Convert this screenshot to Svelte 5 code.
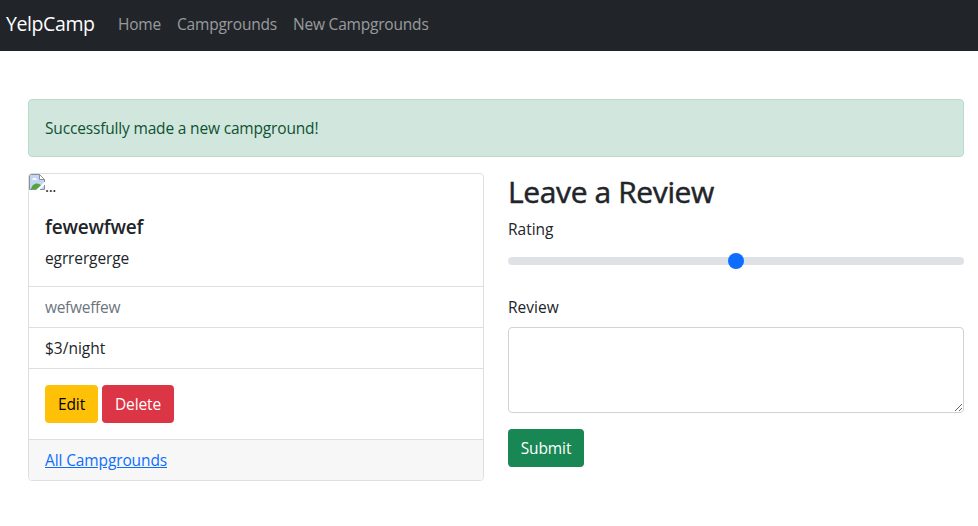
<script>
  let rating = $state(3);
  let review = $state('');
  const links = [
    { label: 'Home', width: 43 },
    { label: 'Campgrounds', width: 100 },
    { label: 'New Campgrounds', width: 137 }
  ];
</script>

<nav class="navbar">
  <a class="brand" href="#home">YelpCamp</a>
  {#each links as link}
    <a class="nav-link" href="#nav" style="width: {link.width}px">{link.label}</a>
  {/each}
</nav>

<main>
  <div class="alert" role="alert"><span>Successfully made a new campground!</span></div>
  <div class="row">
    <section class="card">
      <div class="image">
        <svg width="16" height="16" viewBox="0 0 16 16" aria-hidden="true">
          <path d="M.5.5h10l5 5v10H.5z" fill="#fff" />
          <path d="M1 1h9v5h5v9H1z" fill="#c3d5f6" />
          <path d="M3 5.800c0-1 .8-1.400 1.500-1.300C5 3.400 6.800 3.500 7 4.700c1 0 1.300.4 1.300 1.100z" fill="#fff" />
          <path d="M2 15c.6-3.400 3-5.600 6-5.600 2 0 3.500 1 4.500 2.300L10 15z" fill="#52a63a" />
          <path d="M16 7.500v3L10.500 16H7z" fill="#fff" />
          <path d="M7.500 15.500h-7V.5h10l5 5v2.500M10.500.5v5h5M15.500 11v4.500H11" fill="none" stroke="#8b8f94" />
        </svg><span>...</span>
      </div>
      <div class="body intro">
        <h5>fewewfwef</h5>
        <p><span class="desc">egrrergerge</span></p>
      </div>
      <ul>
        <li class="muted"><span class="place">wefweffew</span></li>
        <li><span class="price">$3/night</span></li>
      </ul>
      <div class="body actions">
        <a class="btn edit" href="#edit">Edit</a>
        <button class="btn delete">Delete</button>
      </div>
      <div class="footer"><a href="#all">All Campgrounds</a></div>
    </section>

    <section class="review">
      <h2>Leave a Review</h2>
      <form onsubmit={(e) => e.preventDefault()}>
        <div class="field rating">
          <label for="rating">Rating</label>
          <input id="rating" type="range" min="1" max="5" bind:value={rating} />
        </div>
        <div class="field">
          <label for="review">Review</label>
          <textarea id="review" bind:value={review}></textarea>
        </div>
        <button class="btn submit">Submit</button>
      </form>
    </section>
  </div>
</main>

<style>
  :global(body) {
    margin: 0;
    background: #fff;
    color: #212529;
    font: 400 15.5px/24px "Open Sans", "Noto Sans", sans-serif;
  }
  * { box-sizing: border-box; }
  a, span, h2, h5, label, .btn { white-space: nowrap; }
  .navbar {
    display: flex;
    align-items: center;
    gap: 16px;
    height: 51px;
    padding: 0 6px 4px;
    background: #212529;
  }
  .brand {
    width: 88px;
    margin-right: 8px;
    color: #fff;
    font-size: 19.5px;
    line-height: 30px;
    text-decoration: none;
    letter-spacing: -0.4px;
  }
  .nav-link {
    color: rgba(255, 255, 255, 0.55);
    text-decoration: none;
    letter-spacing: -0.2px;
  }
  main { padding: 48px 14px 0 28px; }
  .alert {
    height: 58px;
    padding: 16px;
    margin-bottom: 16px;
    border: 1px solid #badbcc;
    border-radius: 4px;
    background: #d1e7dd;
    color: #0f5132;
    letter-spacing: -0.17px;
  }
  .row { display: grid; grid-template-columns: 456px 456px; gap: 24px; }
  .card {
    height: 308px;
    border: 1px solid #dfdfdf;
    border-radius: 4px;
    overflow: hidden;
  }
  .image { display: flex; height: 24px; line-height: 25px; letter-spacing: -0.4px; }
  .image svg { flex: none; }
  .body { padding: 16px; }
  .intro { height: 88px; padding-top: 17px; }
  h5 {
    margin: 0 0 7px;
    font-size: 19px;
    font-weight: 600;
    line-height: 24px;
    letter-spacing: -0.2px;
  }
  p { margin: 0; line-height: 24px; }
  .desc { letter-spacing: -0.12px; }
  .place { letter-spacing: -0.3px; }
  ul { margin: 0; padding: 0; list-style: none; border-top: 1px solid #dfdfdf; }
  li { height: 41px; padding: 8px 16px; border-bottom: 1px solid #dfdfdf; }
  .muted { color: #6c757d; }
  .actions { display: flex; gap: 4px; height: 70px; }
  .btn {
    display: block;
    height: 38px;
    padding: 7px 0;
    border: 0;
    border-radius: 4px;
    color: #fff;
    font: inherit;
    line-height: 24px;
    text-align: center;
    text-decoration: none;
    letter-spacing: -0.1px;
  }
  .edit { width: 53px; background: #ffc107; color: #000; }
  .delete { width: 72px; background: #dc3545; }
  .submit { width: 76px; background: #198754; }
  .footer {
    height: 42px;
    padding: 8px 16px;
    border-top: 1px solid #dfdfdf;
    background: #f7f7f7;
  }
  .footer a { color: #0d6efd; letter-spacing: -0.12px; }
  h2 {
    margin: 0 0 6px;
    font-size: 30px;
    font-weight: 400;
    line-height: 38px;
    letter-spacing: -0.38px;
    -webkit-text-stroke: 0.5px currentColor;
  }
  label { display: block; height: 24px; margin-bottom: 8px; }
  .field { margin-bottom: 16px; }
  .rating { height: 62px; }
  input {
    display: block;
    width: 100%;
    height: 24px;
    margin: 0;
    padding: 0;
    appearance: none;
    background: transparent;
  }
  input::-webkit-slider-runnable-track { height: 8px; border-radius: 16px; background: #dee2e6; }
  input::-webkit-slider-thumb {
    width: 16px;
    height: 16px;
    margin-top: -4px;
    appearance: none;
    border-radius: 50%;
    background: #0d6efd;
  }
  textarea {
    display: block;
    width: 100%;
    height: 86px;
    padding: 6px 12px;
    border: 1px solid #ced4da;
    border-radius: 4px;
    outline: 0;
    background: #fff;
    font: inherit;
    resize: vertical;
  }
</style>
